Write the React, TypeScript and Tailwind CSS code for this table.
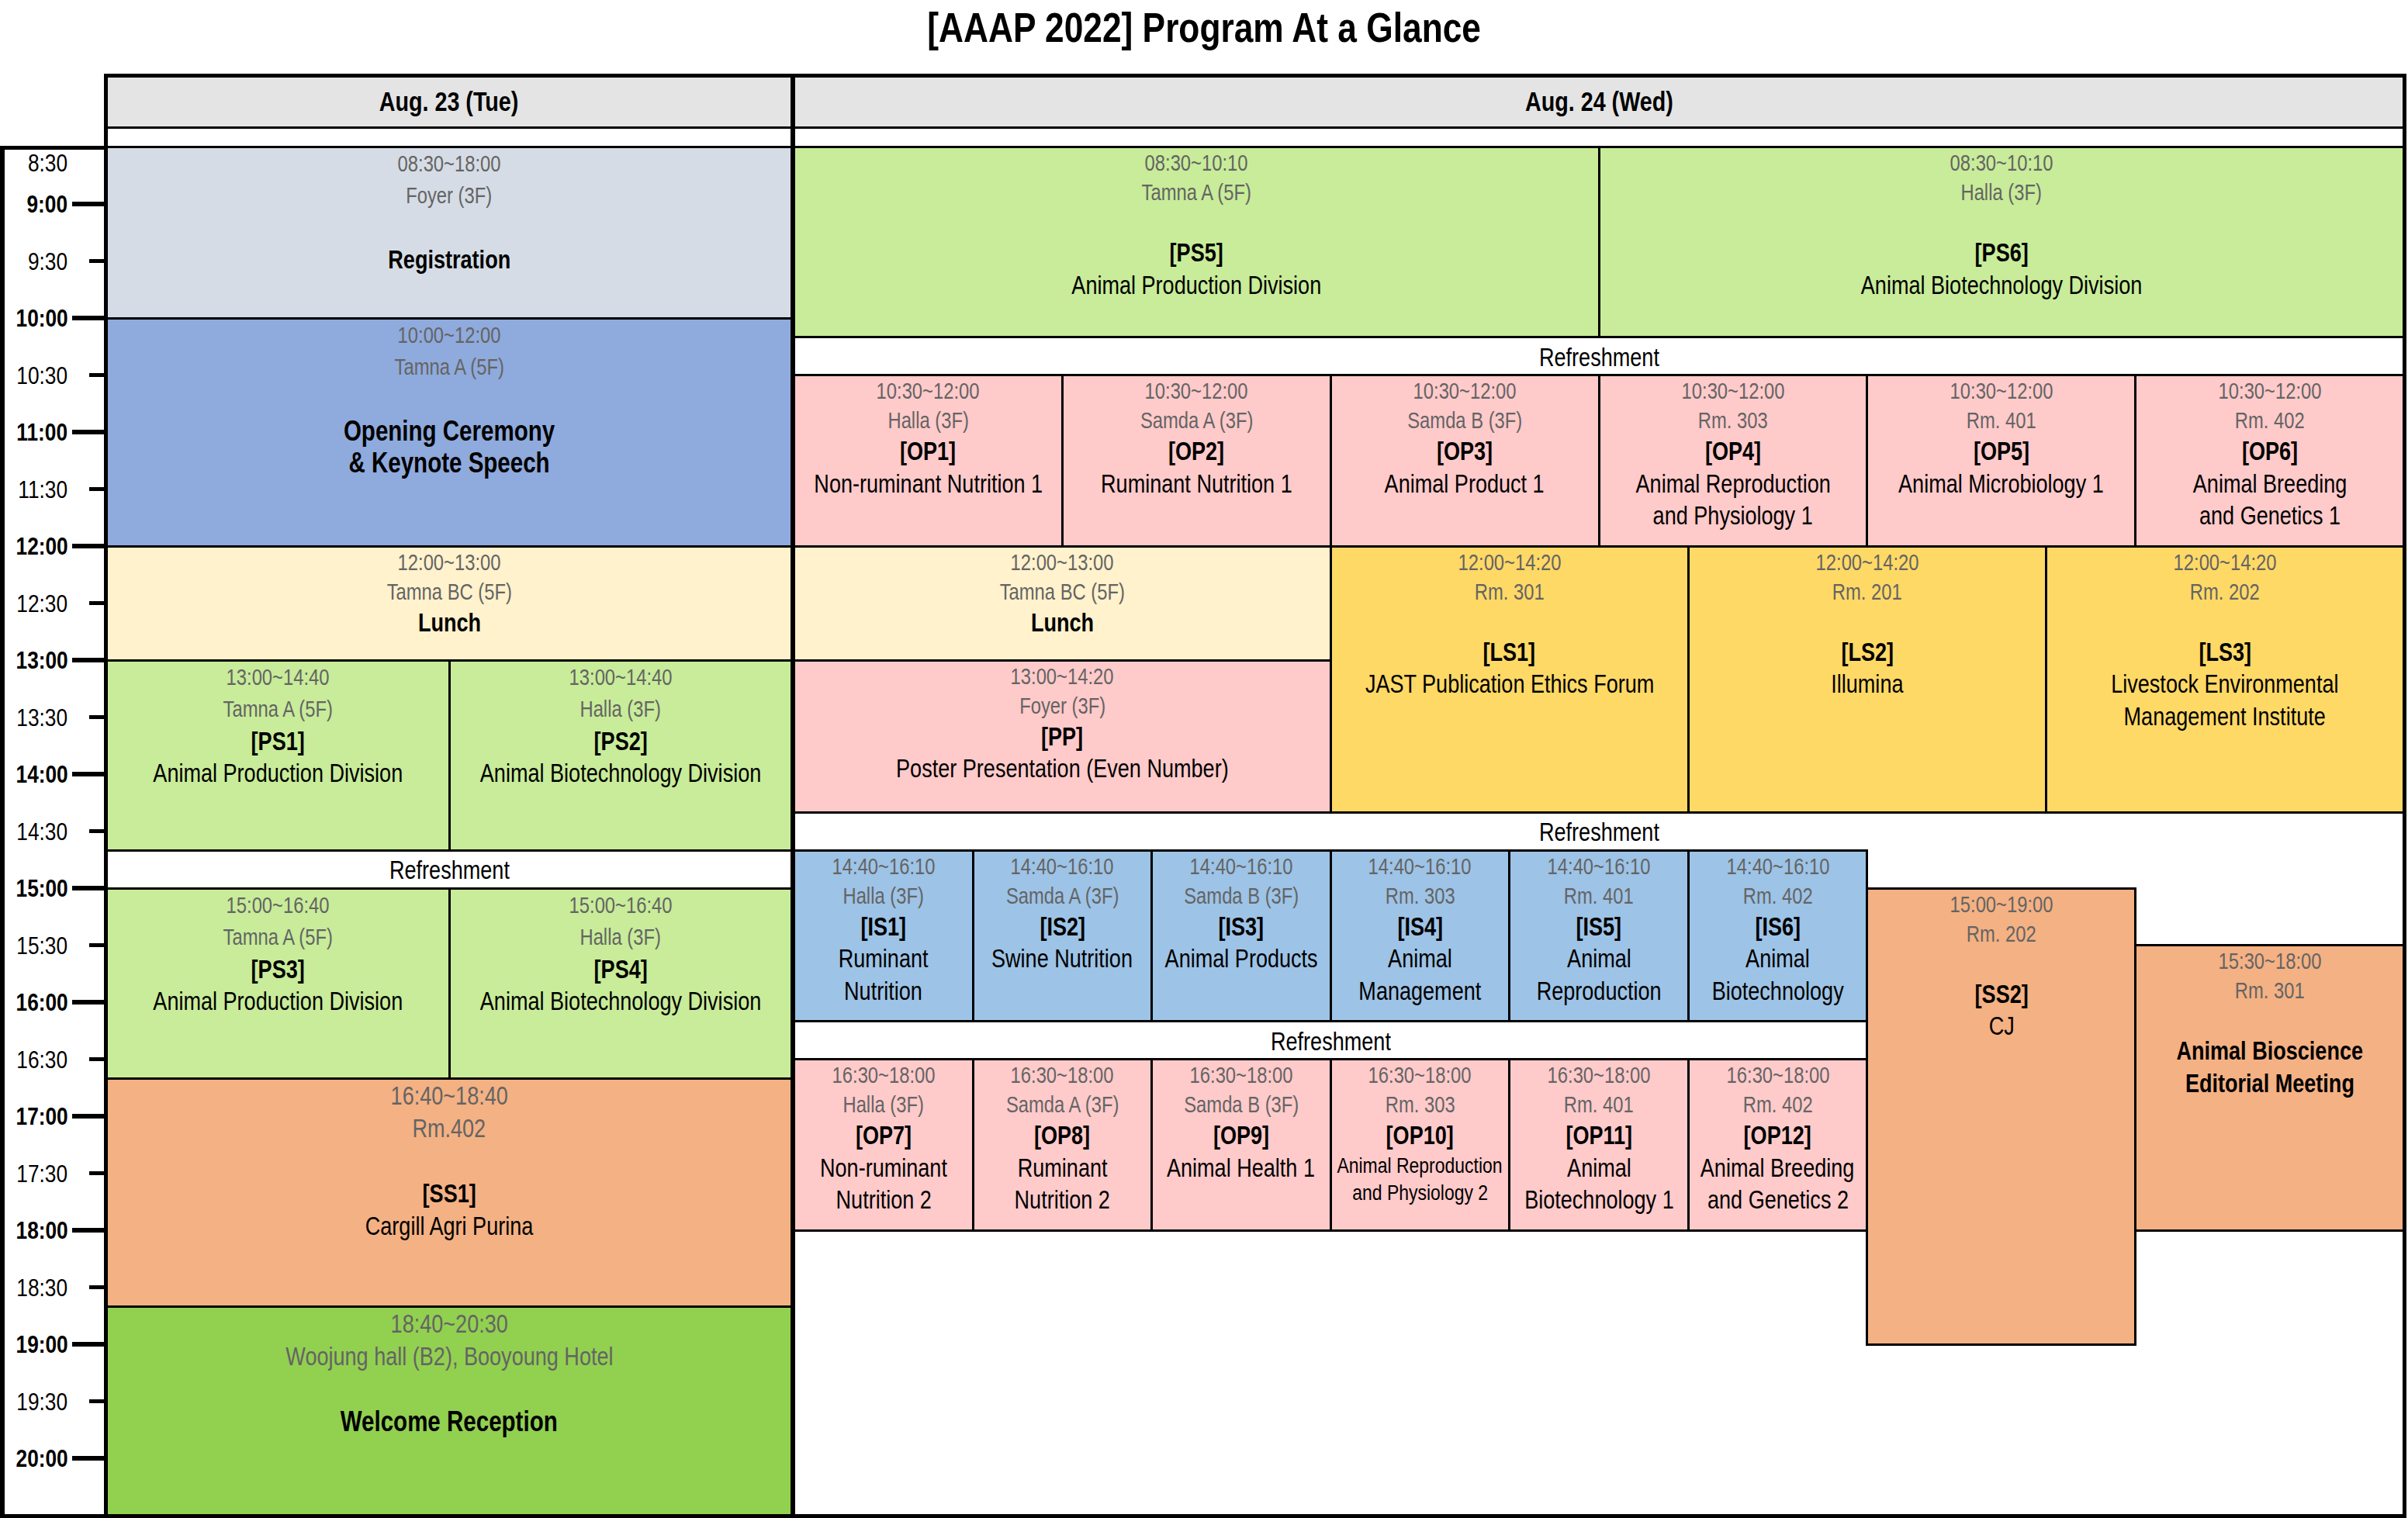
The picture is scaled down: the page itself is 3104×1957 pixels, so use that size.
import React from "react"

type Kind = "g" | "n" | "b" | "B" | "s" | "gap"
type Mode = "d1" | "d2" | "big"
type Line = [Kind, string?]
type Ev = { pos: string; bg: string; mode: Mode; lines: Line[] }

// no narrow face installed: Liberation Sans squeezed to Arial Narrow's width
const FONT = "font-['Liberation_Sans',Arial,sans-serif]"
const NARROW = "scale-x-[0.82]"

// line boxes per layout mode, heights taken from the reference pitch
const LINE: Record<Mode, Record<Kind, string>> = {
    d1: {
        g: "h-[41px] leading-[41px] text-[29px] text-[#646464]",
        n: "h-[41px] leading-[41px] text-[33px]",
        b: "h-[41px] leading-[41px] text-[33px] font-bold",
        B: "h-[41px] leading-[41px] text-[36px] font-bold",
        s: "h-[35px] leading-[35px] text-[28px]",
        gap: "h-[41px]",
    },
    d2: {
        g: "h-[38px] leading-[38px] text-[29px] text-[#646464]",
        n: "h-[41.5px] leading-[41.5px] text-[33px]",
        b: "h-[41.5px] leading-[41.5px] text-[33px] font-bold",
        B: "h-[41.5px] leading-[41.5px] text-[36px] font-bold",
        s: "h-[35px] leading-[35px] text-[28px]",
        gap: "h-[38px]",
    },
    big: {
        g: "h-[42px] leading-[42px] text-[33px] text-[#646464]",
        n: "h-[42px] leading-[42px] text-[33px]",
        b: "h-[42px] leading-[42px] text-[33px] font-bold",
        B: "h-[42px] leading-[42px] text-[36px] font-bold",
        s: "h-[35px] leading-[35px] text-[28px]",
        gap: "h-[42px]",
    },
}

const GREEN = "bg-[#c8ec99]"
const PINK = "bg-[#ffcaca]"
const BLUE = "bg-[#9dc3e6]"
const GOLD = "bg-[#ffd966]"
const ORANGE = "bg-[#f4b183]"
const CREAM = "bg-[#fff2cc]"

const day1: Ev[] = [
    { pos: "col-start-[1] col-end-[3] row-start-[1] row-end-[10]", bg: "bg-[#d6dce5]", mode: "d1", lines: [["g", "08:30~18:00"], ["g", "Foyer (3F)"], ["gap"], ["b", "Registration"]] },
    { pos: "col-start-[1] col-end-[3] row-start-[10] row-end-[22]", bg: "bg-[#8faadc]", mode: "d1", lines: [["g", "10:00~12:00"], ["g", "Tamna A (5F)"], ["gap"], ["B", "Opening Ceremony"], ["B", "& Keynote Speech"]] },
    { pos: "col-start-[1] col-end-[3] row-start-[22] row-end-[28]", bg: CREAM, mode: "d2", lines: [["g", "12:00~13:00"], ["g", "Tamna BC (5F)"], ["b", "Lunch"]] },
    { pos: "col-start-[1] col-end-[2] row-start-[28] row-end-[38]", bg: GREEN, mode: "d1", lines: [["g", "13:00~14:40"], ["g", "Tamna A (5F)"], ["b", "[PS1]"], ["n", "Animal Production Division"]] },
    { pos: "col-start-[2] col-end-[3] row-start-[28] row-end-[38]", bg: GREEN, mode: "d1", lines: [["g", "13:00~14:40"], ["g", "Halla (3F)"], ["b", "[PS2]"], ["n", "Animal Biotechnology Division"]] },
    { pos: "col-start-[1] col-end-[2] row-start-[40] row-end-[50]", bg: GREEN, mode: "d1", lines: [["g", "15:00~16:40"], ["g", "Tamna A (5F)"], ["b", "[PS3]"], ["n", "Animal Production Division"]] },
    { pos: "col-start-[2] col-end-[3] row-start-[40] row-end-[50]", bg: GREEN, mode: "d1", lines: [["g", "15:00~16:40"], ["g", "Halla (3F)"], ["b", "[PS4]"], ["n", "Animal Biotechnology Division"]] },
    { pos: "col-start-[1] col-end-[3] row-start-[50] row-end-[62]", bg: ORANGE, mode: "big", lines: [["g", "16:40~18:40"], ["g", "Rm.402"], ["gap"], ["b", "[SS1]"], ["n", "Cargill Agri Purina"]] },
    { pos: "col-start-[1] col-end-[3] row-start-[62] row-end-[73]", bg: "bg-[#92d050]", mode: "big", lines: [["g", "18:40~20:30"], ["g", "Woojung hall (B2), Booyoung Hotel"], ["gap"], ["B", "Welcome Reception"]] },
]

const day1Breaks = ["col-start-[1] col-end-[3] row-start-[38] row-end-[40]"]

const day2: Ev[] = [
    { pos: "col-start-[1] col-end-[10] row-start-[1] row-end-[11]", bg: GREEN, mode: "d2", lines: [["g", "08:30~10:10"], ["g", "Tamna A (5F)"], ["gap"], ["b", "[PS5]"], ["n", "Animal Production Division"]] },
    { pos: "col-start-[10] col-end-[19] row-start-[1] row-end-[11]", bg: GREEN, mode: "d2", lines: [["g", "08:30~10:10"], ["g", "Halla (3F)"], ["gap"], ["b", "[PS6]"], ["n", "Animal Biotechnology Division"]] },

    { pos: "col-start-[1] col-end-[4] row-start-[13] row-end-[22]", bg: PINK, mode: "d2", lines: [["g", "10:30~12:00"], ["g", "Halla (3F)"], ["b", "[OP1]"], ["n", "Non-ruminant Nutrition 1"]] },
    { pos: "col-start-[4] col-end-[7] row-start-[13] row-end-[22]", bg: PINK, mode: "d2", lines: [["g", "10:30~12:00"], ["g", "Samda A (3F)"], ["b", "[OP2]"], ["n", "Ruminant Nutrition 1"]] },
    { pos: "col-start-[7] col-end-[10] row-start-[13] row-end-[22]", bg: PINK, mode: "d2", lines: [["g", "10:30~12:00"], ["g", "Samda B (3F)"], ["b", "[OP3]"], ["n", "Animal Product 1"]] },
    { pos: "col-start-[10] col-end-[13] row-start-[13] row-end-[22]", bg: PINK, mode: "d2", lines: [["g", "10:30~12:00"], ["g", "Rm. 303"], ["b", "[OP4]"], ["n", "Animal Reproduction"], ["n", "and Physiology 1"]] },
    { pos: "col-start-[13] col-end-[16] row-start-[13] row-end-[22]", bg: PINK, mode: "d2", lines: [["g", "10:30~12:00"], ["g", "Rm. 401"], ["b", "[OP5]"], ["n", "Animal Microbiology 1"]] },
    { pos: "col-start-[16] col-end-[19] row-start-[13] row-end-[22]", bg: PINK, mode: "d2", lines: [["g", "10:30~12:00"], ["g", "Rm. 402"], ["b", "[OP6]"], ["n", "Animal Breeding"], ["n", "and Genetics 1"]] },

    { pos: "col-start-[1] col-end-[7] row-start-[22] row-end-[28]", bg: CREAM, mode: "d2", lines: [["g", "12:00~13:00"], ["g", "Tamna BC (5F)"], ["b", "Lunch"]] },
    { pos: "col-start-[1] col-end-[7] row-start-[28] row-end-[36]", bg: PINK, mode: "d2", lines: [["g", "13:00~14:20"], ["g", "Foyer (3F)"], ["b", "[PP]"], ["n", "Poster Presentation (Even Number)"]] },
    { pos: "col-start-[7] col-end-[11] row-start-[22] row-end-[36]", bg: GOLD, mode: "d2", lines: [["g", "12:00~14:20"], ["g", "Rm. 301"], ["gap"], ["b", "[LS1]"], ["n", "JAST Publication Ethics Forum"]] },
    { pos: "col-start-[11] col-end-[15] row-start-[22] row-end-[36]", bg: GOLD, mode: "d2", lines: [["g", "12:00~14:20"], ["g", "Rm. 201"], ["gap"], ["b", "[LS2]"], ["n", "Illumina"]] },
    { pos: "col-start-[15] col-end-[19] row-start-[22] row-end-[36]", bg: GOLD, mode: "d2", lines: [["g", "12:00~14:20"], ["g", "Rm. 202"], ["gap"], ["b", "[LS3]"], ["n", "Livestock Environmental"], ["n", "Management Institute"]] },

    { pos: "col-start-[1] col-end-[3] row-start-[38] row-end-[47]", bg: BLUE, mode: "d2", lines: [["g", "14:40~16:10"], ["g", "Halla (3F)"], ["b", "[IS1]"], ["n", "Ruminant"], ["n", "Nutrition"]] },
    { pos: "col-start-[3] col-end-[5] row-start-[38] row-end-[47]", bg: BLUE, mode: "d2", lines: [["g", "14:40~16:10"], ["g", "Samda A (3F)"], ["b", "[IS2]"], ["n", "Swine Nutrition"]] },
    { pos: "col-start-[5] col-end-[7] row-start-[38] row-end-[47]", bg: BLUE, mode: "d2", lines: [["g", "14:40~16:10"], ["g", "Samda B (3F)"], ["b", "[IS3]"], ["n", "Animal Products"]] },
    { pos: "col-start-[7] col-end-[9] row-start-[38] row-end-[47]", bg: BLUE, mode: "d2", lines: [["g", "14:40~16:10"], ["g", "Rm. 303"], ["b", "[IS4]"], ["n", "Animal"], ["n", "Management"]] },
    { pos: "col-start-[9] col-end-[11] row-start-[38] row-end-[47]", bg: BLUE, mode: "d2", lines: [["g", "14:40~16:10"], ["g", "Rm. 401"], ["b", "[IS5]"], ["n", "Animal"], ["n", "Reproduction"]] },
    { pos: "col-start-[11] col-end-[13] row-start-[38] row-end-[47]", bg: BLUE, mode: "d2", lines: [["g", "14:40~16:10"], ["g", "Rm. 402"], ["b", "[IS6]"], ["n", "Animal"], ["n", "Biotechnology"]] },

    { pos: "col-start-[1] col-end-[3] row-start-[49] row-end-[58]", bg: PINK, mode: "d2", lines: [["g", "16:30~18:00"], ["g", "Halla (3F)"], ["b", "[OP7]"], ["n", "Non-ruminant"], ["n", "Nutrition 2"]] },
    { pos: "col-start-[3] col-end-[5] row-start-[49] row-end-[58]", bg: PINK, mode: "d2", lines: [["g", "16:30~18:00"], ["g", "Samda A (3F)"], ["b", "[OP8]"], ["n", "Ruminant"], ["n", "Nutrition 2"]] },
    { pos: "col-start-[5] col-end-[7] row-start-[49] row-end-[58]", bg: PINK, mode: "d2", lines: [["g", "16:30~18:00"], ["g", "Samda B (3F)"], ["b", "[OP9]"], ["n", "Animal Health 1"]] },
    { pos: "col-start-[7] col-end-[9] row-start-[49] row-end-[58]", bg: PINK, mode: "d2", lines: [["g", "16:30~18:00"], ["g", "Rm. 303"], ["b", "[OP10]"], ["s", "Animal Reproduction"], ["s", "and Physiology 2"]] },
    { pos: "col-start-[9] col-end-[11] row-start-[49] row-end-[58]", bg: PINK, mode: "d2", lines: [["g", "16:30~18:00"], ["g", "Rm. 401"], ["b", "[OP11]"], ["n", "Animal"], ["n", "Biotechnology 1"]] },
    { pos: "col-start-[11] col-end-[13] row-start-[49] row-end-[58]", bg: PINK, mode: "d2", lines: [["g", "16:30~18:00"], ["g", "Rm. 402"], ["b", "[OP12]"], ["n", "Animal Breeding"], ["n", "and Genetics 2"]] },

    { pos: "col-start-[13] col-end-[16] row-start-[40] row-end-[64]", bg: ORANGE, mode: "d2", lines: [["g", "15:00~19:00"], ["g", "Rm. 202"], ["gap"], ["b", "[SS2]"], ["n", "CJ"]] },
    { pos: "col-start-[16] col-end-[19] row-start-[43] row-end-[58]", bg: ORANGE, mode: "d2", lines: [["g", "15:30~18:00"], ["g", "Rm. 301"], ["gap"], ["b", "Animal Bioscience"], ["b", "Editorial Meeting"]] },
]

const day2Breaks = [
    "col-start-[1] col-end-[19] row-start-[11] row-end-[13]",
    "col-start-[1] col-end-[19] row-start-[36] row-end-[38]",
    "col-start-[1] col-end-[13] row-start-[47] row-end-[49]",
]

function Cell({ ev }: { ev: Ev }) {
    return (
        <div className={`${ev.pos} ${ev.bg} -mr-[3px] -mb-[3px] border-[3px] border-black flex flex-col items-center overflow-hidden`}>
            {ev.lines.map(([k, t], i) => (
                <div key={i} className={`${LINE[ev.mode][k]} ${NARROW} whitespace-nowrap`}>{t}</div>
            ))}
        </div>
    )
}

function Refresh({ pos }: { pos: string }) {
    return (
        <div className={`${pos} -mr-[3px] -mb-[3px] pt-[3px] flex items-center justify-center text-[33px]`}>
            <span className={NARROW}>Refreshment</span>
        </div>
    )
}

function Day({ title, cols, events, breaks, className }: { title: string; cols: string; events: Ev[]; breaks: string[]; className: string }) {
    return (
        <div className={className}>
            <div className="h-[66px] bg-[#e4e4e4] border-b-[3px] border-black flex items-center justify-center text-[35px] font-bold">
                <span className={NARROW}>{title}</span>
            </div>
            <div className="h-[22px]" />
            <div className={`-ml-[3px] grid ${cols} grid-rows-[repeat(72,24.5px)]`}>
                {breaks.map((p) => <Refresh key={p} pos={p} />)}
                {events.map((ev, i) => <Cell key={i} ev={ev} />)}
            </div>
        </div>
    )
}

const ticks: { label: string; hour: boolean }[] = []
for (let h = 9; h <= 20; h++) {
    ticks.push({ label: `${h}:00`, hour: true })
    if (h < 20) ticks.push({ label: `${h}:30`, hour: false })
}

function TimeAxis() {
    return (
        <div className="mt-[93px] w-[134px] h-[1769px] shrink-0 border-l-[6px] border-t-[5px] border-b-[5px] border-black flex flex-col">
            <div className="h-[33.25px] flex items-center">
                <span className={`w-[81px] text-right text-[32px] leading-none origin-right ${NARROW}`}>8:30</span>
            </div>
            {ticks.map((t) => (
                <div key={t.label} className="h-[73.5px] shrink-0 flex items-center">
                    <span className={`w-[81px] text-right text-[32px] leading-none origin-right ${NARROW} ${t.hour ? "font-bold" : ""}`}>{t.label}</span>
                    <div className="flex-1 flex justify-end">
                        <div className={t.hour ? "w-[41px] h-[6px] bg-black" : "w-[19px] h-[5px] bg-black"} />
                    </div>
                </div>
            ))}
        </div>
    )
}

export default function App() {
    return (
        <div className={`w-[3104px] h-[1957px] bg-white text-black overflow-hidden ${FONT}`}>
            <h1 className="h-[95px] pt-[4px] text-center text-[54px] font-bold leading-[62px]">
                <span className={`inline-block ${NARROW}`}>[AAAP 2022] Program At a Glance</span>
            </h1>
            <div className="flex">
                <TimeAxis />
                <div className="flex w-[2968px] h-[1862px] border-[5px] border-black">
                    <Day
                        title="Aug. 23 (Tue)"
                        cols="grid-cols-2"
                        events={day1}
                        breaks={day1Breaks}
                        className="w-[886px] shrink-0 border-r-[6px] border-black"
                    />
                    <Day
                        title="Aug. 24 (Wed)"
                        cols="grid-cols-[repeat(18,minmax(0,1fr))]"
                        events={day2}
                        breaks={day2Breaks}
                        className="flex-1 min-w-0"
                    />
                </div>
            </div>
        </div>
    )
}
